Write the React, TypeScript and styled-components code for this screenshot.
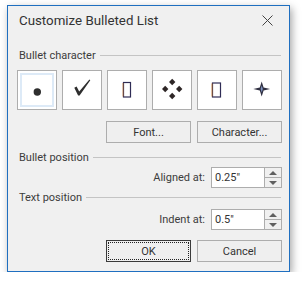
import React from 'react';
import styled, { createGlobalStyle, css } from 'styled-components';

const GlobalStyle = createGlobalStyle`
  html, body {
    margin: 0;
    padding: 0;
    background: #ffffff;
  }
  body {
    font-family: Roboto, "Liberation Sans", sans-serif;
  }
`;

const Page = styled.div`
  padding: 5px 0 0 7px;
`;

const Window = styled.div`
  box-sizing: border-box;
  width: 283px;
  height: 267px;
  background: #f0f0f0;
  border: 1px solid #1f6fc0;
  box-shadow: 2px 3px 8px rgba(0, 0, 0, 0.35);
  display: flex;
  flex-direction: column;
`;

const TitleBar = styled.div`
  box-sizing: border-box;
  height: 34px;
  display: flex;
  align-items: flex-start;
  justify-content: space-between;
  padding: 5px 16px 0 11px;
`;

const Title = styled.span`
  font-size: 13.3px;
  line-height: 20px;
  color: #333333;
`;

const CloseButton = styled.button`
  margin-top: 4px;
  width: 11px;
  height: 11px;
  padding: 0;
  border: 0;
  background: transparent;
  display: flex;
`;

const Body = styled.div`
  padding: 7px 6px 0 9px;
  display: flex;
  flex-direction: column;
`;

const GroupHeader = styled.div<{ $top: number }>`
  height: 16px;
  margin-top: ${p => p.$top}px;
  display: flex;
  align-items: center;
  gap: 4px;
  padding-left: 2px;
  font-size: 11px;
  color: #3c3c3c;

  &::after {
    content: '';
    flex: 1;
    height: 1px;
    margin-right: 2px;
    background: #c4c4c4;
  }
`;

const BulletGrid = styled.div`
  margin-top: 7px;
  display: grid;
  grid-template-columns: repeat(6, 40px);
  gap: 5px;
`;

const BulletBox = styled.div<{ $selected?: boolean }>`
  box-sizing: border-box;
  width: 40px;
  height: 40px;
  background: #ffffff;
  border: 1px solid #adadad;
  display: flex;
  ${p =>
    p.$selected &&
    css`
      box-shadow: inset 0 0 0 2px #ffffff, inset 0 0 0 4px #ddeaf7;
    `}
`;

const ButtonRow = styled.div<{ $top: number }>`
  margin-top: ${p => p.$top}px;
  display: flex;
  justify-content: flex-end;
  gap: 6px;
  padding-right: 1px;
`;

const Button = styled.button<{ $default?: boolean }>`
  box-sizing: border-box;
  width: 85px;
  height: 22px;
  padding: 0;
  background: #efefef;
  border: 1px solid #adadad;
  font-family: inherit;
  font-size: 11px;
  color: #333333;
  position: relative;
  ${p =>
    p.$default &&
    css`
      border-color: #3a3a3a;
      &::after {
        content: '';
        position: absolute;
        inset: 1px;
        border: 1px dotted #222222;
      }
    `}
`;

const FieldRow = styled.div<{ $top: number }>`
  margin-top: ${p => p.$top}px;
  display: flex;
  justify-content: flex-end;
  align-items: center;
  gap: 6px;
  padding-right: 1px;
  font-size: 11px;
  color: #3c3c3c;
`;

const Spinner = styled.div`
  box-sizing: border-box;
  width: 71px;
  height: 21px;
  display: flex;
  background: #ffffff;
  border: 1px solid #adadad;
`;

const SpinInput = styled.div`
  flex: 1;
  padding-left: 3px;
  font-size: 11px;
  line-height: 19px;
  color: #333333;
  border-right: 1px solid #adadad;
`;

const SpinButtons = styled.div`
  width: 16px;
  display: flex;
  flex-direction: column;
  background: #f0f0f0;
`;

const SpinHalf = styled.div<{ $up?: boolean }>`
  flex: 1;
  display: flex;
  align-items: center;
  justify-content: center;
  ${p => p.$up && 'border-bottom: 1px solid #adadad;'}

  &::before {
    content: '';
    width: 0;
    height: 0;
    border-left: 4px solid transparent;
    border-right: 4px solid transparent;
    ${p =>
      p.$up
        ? 'border-bottom: 4px solid #606060;'
        : 'border-top: 4px solid #606060;'}
  }
`;

const Glyph = styled.svg`
  margin: auto;
  display: block;
`;

const glyphs: React.ReactNode[] = [
  <circle key="dot" cx="19.3" cy="21" r="3.7" fill="#2e2e2e" />,
  <path
    key="check"
    d="M11.3 16.8 L13.6 15.6 L16.2 20.4 L26.4 8.6 L27.3 9.3 L16.6 24.4 L15.1 24.4 Z"
    fill="#2e2e2e"
  />,
  <g key="tofu1">
    <rect x="15.5" y="11.5" width="7" height="14.5" fill="none" stroke="#2f2c55" strokeWidth="1.2" />
    <line x1="15" y1="12" x2="15" y2="25.5" stroke="#d08030" strokeWidth="0.7" />
  </g>,
  <g key="diamonds" fill="#2e2626">
    <path d="M19.2 7.8 l3.2 3.2 l-3.2 3.2 l-3.2 -3.2 Z" />
    <path d="M19.2 21.8 l3.2 3.2 l-3.2 3.2 l-3.2 -3.2 Z" />
    <path d="M12.2 14.8 l3.2 3.2 l-3.2 3.2 l-3.2 -3.2 Z" />
    <path d="M26.2 14.8 l3.2 3.2 l-3.2 3.2 l-3.2 -3.2 Z" />
  </g>,
  <g key="tofu2">
    <rect x="14.5" y="12" width="8" height="14" fill="none" stroke="#2f2c55" strokeWidth="1.2" />
    <line x1="14" y1="12.5" x2="14" y2="25.5" stroke="#d08030" strokeWidth="0.8" />
  </g>,
  <g key="star">
    <path
      d="M10.3 18 L16.8 16.4 L18.7 10.5 L20.6 16.4 L27.1 18 L20.6 19.6 L18.7 25.5 L16.8 19.6 Z"
      fill="#2f2f40"
    />
    <path d="M18.7 14.5 L19.8 18 L18.7 21.5 L17.6 18 Z" fill="#7d93c0" />
  </g>,
];

const App: React.FC = () => {
  return (
    <>
      <GlobalStyle />
      <Page>
        <Window>
          <TitleBar>
            <Title>Customize Bulleted List</Title>
            <CloseButton aria-label="Close">
              <svg width="11" height="11" viewBox="0 0 11 11">
                <path d="M0.5 0.5 L10.5 10.5 M10.5 0.5 L0.5 10.5" stroke="#444" strokeWidth="1" />
              </svg>
            </CloseButton>
          </TitleBar>
          <Body>
            <GroupHeader $top={0}>Bullet character</GroupHeader>
            <BulletGrid>
              {glyphs.map((g, i) => (
                <BulletBox key={i} $selected={i === 0}>
                  <Glyph width="38" height="38" viewBox="0 0 38 38">
                    {g}
                  </Glyph>
                </BulletBox>
              ))}
            </BulletGrid>
            <ButtonRow $top={11}>
              <Button>Font...</Button>
              <Button>Character...</Button>
            </ButtonRow>
            <GroupHeader $top={6}>Bullet position</GroupHeader>
            <FieldRow $top={2}>
              <span>Aligned at:</span>
              <Spinner>
                <SpinInput>0.25"</SpinInput>
                <SpinButtons>
                  <SpinHalf $up />
                  <SpinHalf />
                </SpinButtons>
              </Spinner>
            </FieldRow>
            <GroupHeader $top={1}>Text position</GroupHeader>
            <FieldRow $top={4}>
              <span>Indent at:</span>
              <Spinner>
                <SpinInput>0.5"</SpinInput>
                <SpinButtons>
                  <SpinHalf $up />
                  <SpinHalf />
                </SpinButtons>
              </Spinner>
            </FieldRow>
            <ButtonRow $top={10}>
              <Button $default>OK</Button>
              <Button>Cancel</Button>
            </ButtonRow>
          </Body>
        </Window>
      </Page>
    </>
  );
};

export default App;
